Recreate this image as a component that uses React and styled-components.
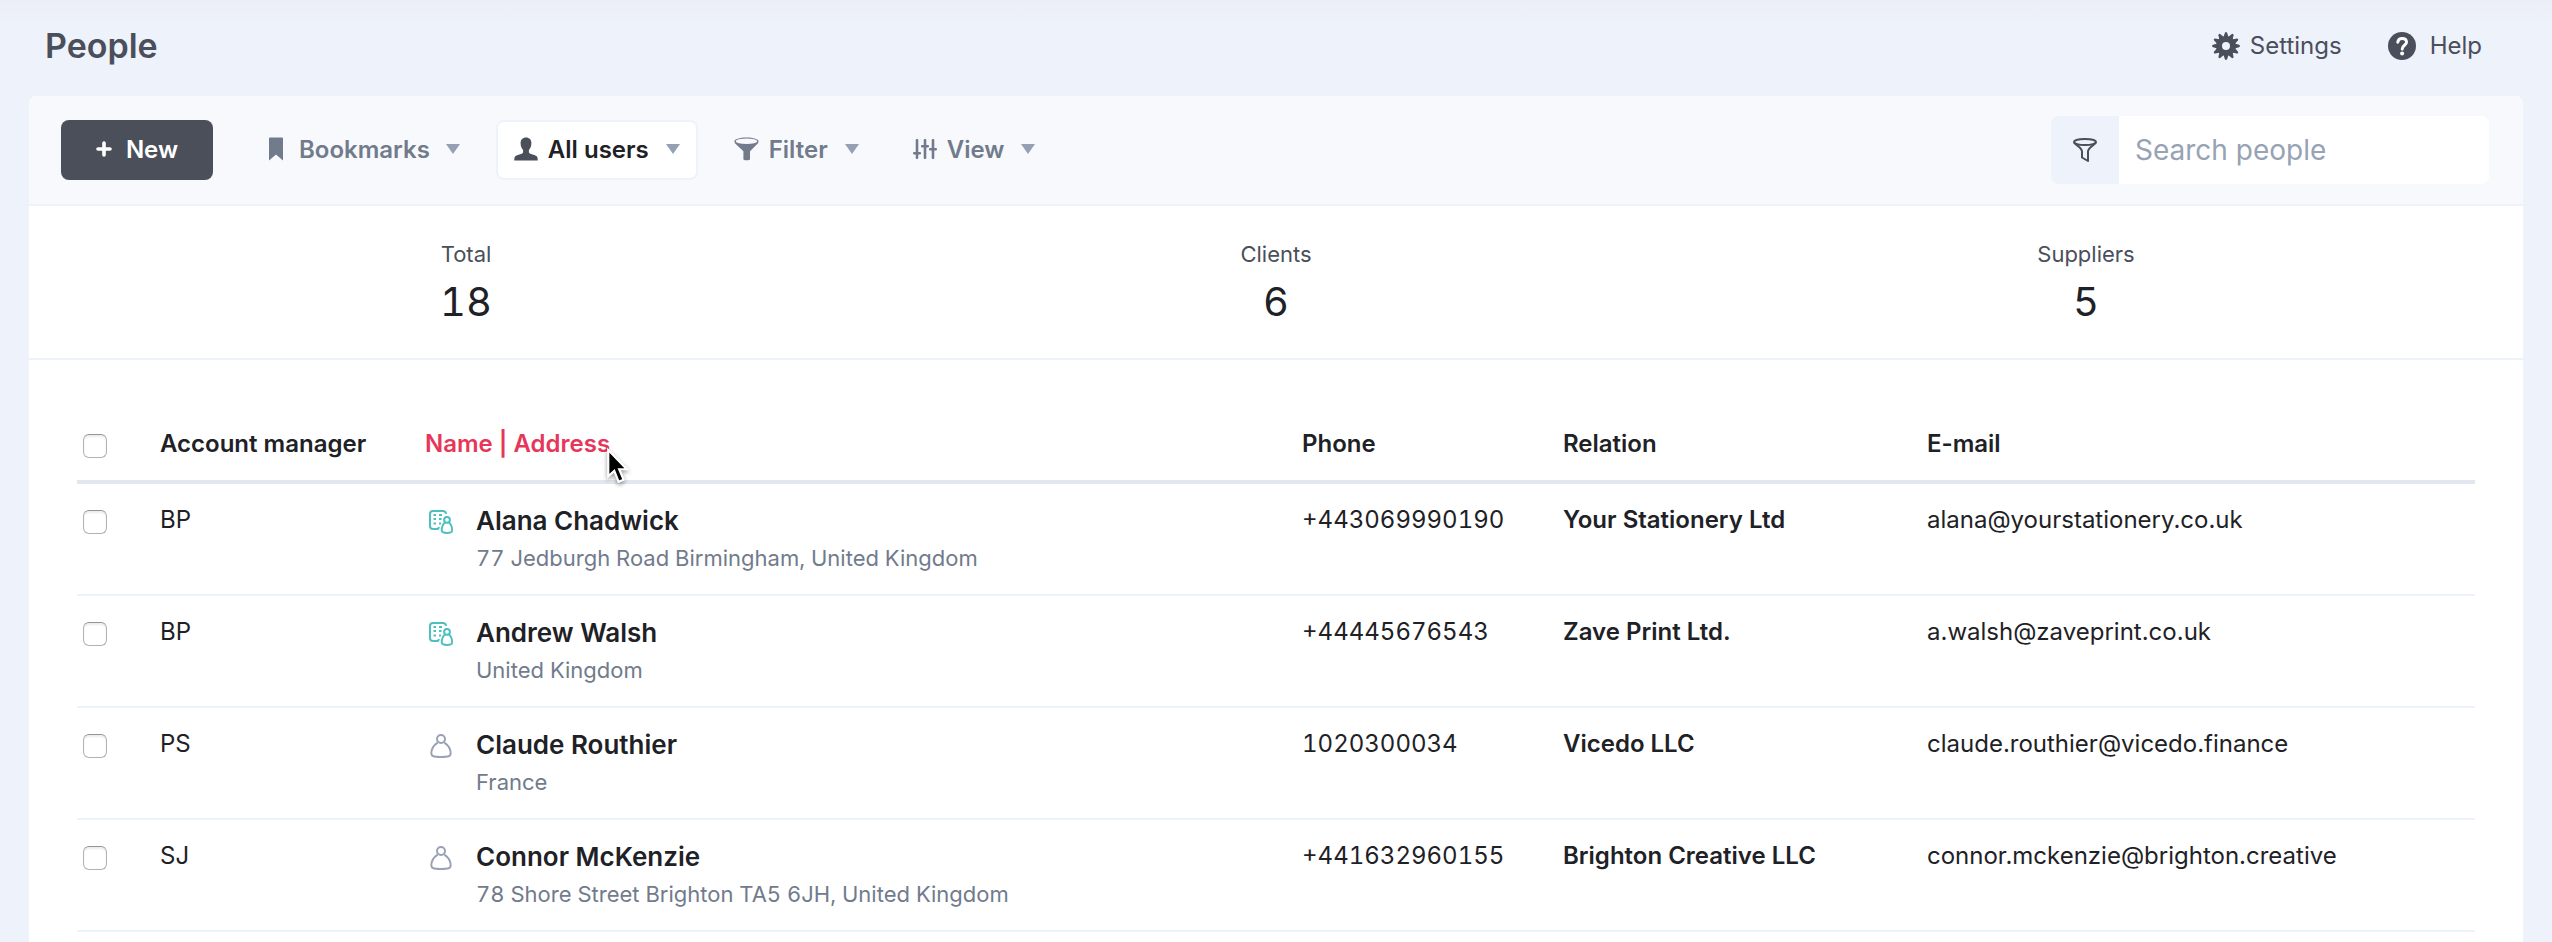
import styled, { createGlobalStyle, css } from "styled-components";

const GlobalStyle = createGlobalStyle`
  * {
    box-sizing: border-box;
  }
  body {
    margin: 0;
    background: #eef2fb;
    color: #1e2126;
    font-family: Inter, "Liberation Sans", sans-serif;
    font-size: 24px;
    line-height: 32px;
  }
  button,
  input {
    font-family: inherit;
  }
`;

const Page = styled.div`
  min-height: 100vh;
  padding: 0 29px;
  display: flex;
  flex-direction: column;
  background: linear-gradient(#ebeef7, #eef2fb 26px);
`;

const Header = styled.header`
  height: 96px;
  padding: 0 41px 4px 16px;
  display: flex;
  align-items: center;
  justify-content: space-between;
`;

const Title = styled.h1`
  margin: 0;
  font-size: 34px;
  font-weight: 600;
  line-height: 40px;
  color: #4a4f5b;
`;

const HeaderLinks = styled.nav`
  display: flex;
  gap: 46px;
`;

const HeaderLink = styled.a`
  display: flex;
  align-items: center;
  gap: ${(props) => props.$gap}px;
  color: #4a4f5b;
  text-decoration: none;

  svg {
    width: 28px;
    height: 28px;
  }
`;

const Panel = styled.main`
  flex: 1;
  background: #fff;
  border-radius: 8px 8px 0 0;
`;

const Toolbar = styled.div`
  display: flex;
  align-items: center;
  height: 110px;
  padding: 0 34px 0 32px;
  background: #f8f9fd;
  border-bottom: 2px solid #eef2fb;
  border-radius: 8px 8px 0 0;
`;

const NewButton = styled.button`
  display: flex;
  align-items: center;
  justify-content: center;
  gap: 14px;
  width: 152px;
  height: 60px;
  margin-right: 38px;
  padding: 0 0 2px;
  border: 0;
  border-radius: 8px;
  background: #4a4f5a;
  color: #fff;
  font-size: 24px;
  font-weight: 600;
`;

const MenuButton = styled.button`
  display: flex;
  align-items: center;
  gap: ${(props) => props.$gap || 10}px;
  height: 60px;
  margin-right: 18px;
  padding: 0 16px 2px;
  border: 2px solid transparent;
  border-radius: 8px;
  background: transparent;
  color: #717b8c;
  font-size: 24px;
  font-weight: 600;

  ${(props) =>
    props.$active &&
    css`
      background: #fff;
      border-color: #eef2fb;
      color: #1e2126;
    `}
`;

const Caret = styled.span`
  margin-left: ${(props) => props.$space}px;
  border: 7px solid transparent;
  border-top: 10px solid #95a0b3;
  border-bottom: 0;
`;

const Search = styled.form`
  display: flex;
  width: 438px;
  height: 68px;
  margin-left: auto;
  border-radius: 8px;
  overflow: hidden;
`;

const SearchFilter = styled.button`
  display: flex;
  align-items: center;
  justify-content: center;
  flex: none;
  width: 68px;
  padding: 0;
  border: 0;
  background: #eef2fb;
`;

const SearchInput = styled.input`
  flex: 1;
  min-width: 0;
  padding: 0 16px;
  border: 0;
  background: #fff;
  color: #1e2126;
  font-size: 28px;

  &::placeholder {
    color: #97a2b4;
    opacity: 1;
  }
`;

const Stats = styled.dl`
  display: grid;
  grid-template-columns: repeat(3, 1fr);
  height: 154px;
  margin: 0;
  padding: 32px 32px 0;
  border-bottom: 2px solid #eef2fb;
  text-align: center;
`;

const StatLabel = styled.dt`
  font-size: 22px;
  color: #4a4f5b;
`;

const StatValue = styled.dd`
  margin: 8px 0 0;
  font-size: 40px;
  font-variant-numeric: tabular-nums;
  line-height: 48px;
`;

const TableArea = styled.section`
  padding: 48px 48px 0;
`;

const Table = styled.table`
  width: 100%;
  table-layout: fixed;
  border-collapse: separate;
  border-spacing: 0;
  text-align: left;
`;

const Col = styled.col`
  width: ${(props) => props.$width}px;
`;

const HeadCell = styled.th`
  padding: 20px 0;
  border-bottom: 4px solid #e1e6ef;
  font-weight: 600;
  vertical-align: top;
`;

const SortButton = styled.button`
  display: block;
  position: relative;
  padding: 0;
  border: 0;
  background: none;
  color: #e6365a;
  font-size: 24px;
  font-weight: 600;
  line-height: 32px;
`;

const Pointer = styled.svg`
  position: absolute;
  left: 100%;
  top: 21px;
  width: 22px;
  height: 35px;
  margin-left: -4px;
  overflow: visible;
  filter: drop-shadow(0 2px 2px rgba(0, 0, 0, 0.4));
`;

const Cell = styled.td`
  padding: 20px 0 18px;
  border-bottom: 2px solid #eef2fb;
  font-weight: ${(props) => (props.$strong ? 600 : 400)};
  vertical-align: top;
`;

const PhoneCell = styled(Cell)`
  font-variant-numeric: tabular-nums;
`;

const Checkbox = styled.input`
  appearance: none;
  display: block;
  width: 24px;
  height: 24px;
  margin: 6px 0 0 6px;
  border: 1px solid #b2b2b2;
  border-top-color: #959595;
  border-radius: 6px;
  background: #fff;
  box-shadow: inset 0 2px 2px rgba(0, 0, 0, 0.08);
`;

const Person = styled.div`
  display: flex;
  gap: 23px;
  padding-left: 4px;

  > svg {
    flex: none;
    width: 24px;
    height: 24px;
    margin-top: 6px;
  }
`;

const PersonName = styled.a`
  display: block;
  color: #1e2126;
  font-size: 26px;
  font-weight: 600;
  line-height: 34px;
  text-decoration: none;
`;

const Address = styled.div`
  margin-top: 2px;
  color: #717b8c;
  font-size: 22px;
  font-variant-numeric: tabular-nums;
  line-height: 36px;
`;

const teeth = [0, 30, 60, 90, 120, 150, 180, 210, 240, 270, 300, 330];

const GearIcon = () => (
  <svg viewBox="0 0 28 28" fill="#4a4f5b" aria-hidden="true">
    <circle cx="14" cy="14" r="7" fill="none" stroke="#4a4f5b" strokeWidth="6" />
    {teeth.map((angle) => (
      <path
        key={angle}
        d="M11.4 5.5 12.8 1Q14-1 15.2 1L16.6 5.5Z"
        transform={`rotate(${angle} 14 14)`}
      />
    ))}
  </svg>
);

const HelpIcon = () => (
  <svg viewBox="0 0 28 28" fill="none" aria-hidden="true">
    <circle cx="14" cy="14" r="14" fill="#4a4f5b" />
    <path
      d="M9.8 10.2C10.1 7.6 12 6.4 14.1 6.4 16.6 6.4 18.5 7.8 18.5 10.2 18.5 13.2 14.2 13.4 14.2 17"
      stroke="#fff"
      strokeWidth="3"
      strokeLinecap="round"
    />
    <circle cx="14.1" cy="21.6" r="2" fill="#fff" />
  </svg>
);

const PlusIcon = () => (
  <svg width="16" height="16" viewBox="0 0 16 16" aria-hidden="true">
    <path d="M8 2V14M2 8H14" stroke="#fff" strokeWidth="3.6" strokeLinecap="round" />
  </svg>
);

const BookmarkIcon = () => (
  <svg width="14" height="24" viewBox="0 0 14 24" aria-hidden="true">
    <path d="M0 1.5Q0 .5 1 .5H13Q14 .5 14 1.5V23.5L7 17.5 0 23.5Z" fill="#717b8c" />
  </svg>
);

const UserIcon = () => (
  <svg width="24" height="24" viewBox="0 0 24 24" aria-hidden="true">
    <path
      d="M12 .5C8.7 .5 6.6 2.7 6.6 6.2 6.6 9.5 7.8 11.5 9.1 13V15.4C8.5 17.2 3 17.6 1.3 19.2 .4 20 .3 21.7 .3 23.5H23.7C23.7 21.7 23.6 20 22.7 19.2 21 17.6 15.5 17.2 14.9 15.4V13C16.2 11.5 17.4 9.5 17.4 6.2 17.4 2.7 15.3 .5 12 .5Z"
      fill="#4a4f5a"
    />
  </svg>
);

const FilterIcon = () => (
  <svg width="25" height="24" viewBox="0 0 25 24" aria-hidden="true">
    <path
      d="M.4 4.2C.4 2.3 5.5 .5 12.5 .5S24.6 2.3 24.6 4.2C24.6 5.5 23.6 6.7 22.5 7.8L16 14.3V22.5Q12.5 24.2 9.4 22.5V14.3L2.5 7.8C1.4 6.7 .4 5.5 .4 4.2Z"
      fill="#717b8c"
    />
    <ellipse cx="12.5" cy="4.2" rx="10.9" ry="2.8" fill="#f8f9fd" />
  </svg>
);

const ViewIcon = () => (
  <svg width="24" height="20" viewBox="0 0 24 20" aria-hidden="true">
    <path
      d="M4 1.2V18.8M12 1.2V18.8M20 1.2V18.8M1.2 14.2H6.8M9.2 7.2H14.8M17.2 10.2H22.8"
      stroke="#717b8c"
      strokeWidth="2.6"
      strokeLinecap="round"
    />
  </svg>
);

const FunnelIcon = () => (
  <svg width="24" height="24" viewBox="0 0 24 24" fill="none" aria-hidden="true">
    <g stroke="#4a4f5a" strokeWidth="2" strokeLinejoin="round">
      <ellipse cx="12" cy="4" rx="11" ry="3" />
      <path d="M1 4.2C1.5 6.5 9 9.5 9 13.5V19.5L15 23V13.5C15 9.5 22.5 6.5 23 4.2" />
    </g>
  </svg>
);

const PersonIcon = () => (
  <svg viewBox="0 0 24 24" fill="none" aria-label="Person" role="img">
    <g stroke="#97a2b4" strokeWidth="2">
      <circle cx="12" cy="5" r="4" />
      <path d="M8.7 8.6C5.3 10.8 2.3 15.2 2.3 19.6 2.3 22.3 4.5 23 12 23S21.7 22.3 21.7 19.6C21.7 15.2 18.7 10.8 15.3 8.6" />
    </g>
  </svg>
);

const CompanyPersonIcon = () => (
  <svg viewBox="0 0 24 24" fill="none" aria-label="Company contact" role="img">
    <g stroke="#4bc0c0" strokeWidth="2">
      <path d="M17 3.8C16.8 1.8 16 1 14 1H4C1.800 1 1 1.8 1 4V16C1 18.2 1.8 19 4 19H8.5Q9.7 19 9.7 17" />
      <circle cx="18" cy="9.8" r="2.9" />
      <path d="M16.2 12.2C14 14 12.7 17.5 12.7 20.3 12.7 22.4 14 23 18 23S23.2 22.4 23.2 20.3C23.2 17.5 22 14 19.8 12.2" />
      <path d="M4.5 5H7M10 5H13M4.500 9H7M10 9H12.5M4.5 13.5H7M10 13.5H12" />
    </g>
  </svg>
);

const stats = [
  { label: "Total", value: 18 },
  { label: "Clients", value: 6 },
  { label: "Suppliers", value: 5 },
];

const people = [
  {
    manager: "BP",
    name: "Alana Chadwick",
    address: "77 Jedburgh Road Birmingham, United Kingdom",
    phone: "+443069990190",
    relation: "Your Stationery Ltd",
    email: "alana@yourstationery.co.uk",
    company: true,
  },
  {
    manager: "BP",
    name: "Andrew Walsh",
    address: "United Kingdom",
    phone: "+44445676543",
    relation: "Zave Print Ltd.",
    email: "a.walsh@zaveprint.co.uk",
    company: true,
  },
  {
    manager: "PS",
    name: "Claude Routhier",
    address: "France",
    phone: "1020300034",
    relation: "Vicedo LLC",
    email: "claude.routhier@vicedo.finance",
  },
  {
    manager: "SJ",
    name: "Connor McKenzie",
    address: "78 Shore Street Brighton TA5 6JH, United Kingdom",
    phone: "+441632960155",
    relation: "Brighton Creative LLC",
    email: "connor.mckenzie@brighton.creative",
  },
];

const App = () => {
  return (
    <>
      <GlobalStyle />
      <Page>
        <Header>
          <Title>People</Title>
          <HeaderLinks>
            <HeaderLink href="#settings" $gap={10}>
              <GearIcon />
              Settings
            </HeaderLink>
            <HeaderLink href="#help" $gap={14}>
              <HelpIcon />
              Help
            </HeaderLink>
          </HeaderLinks>
        </Header>
        <Panel>
          <Toolbar>
            <NewButton type="button">
              <PlusIcon />
              New
            </NewButton>
            <MenuButton type="button" $gap={16}>
              <BookmarkIcon />
              Bookmarks
              <Caret $space={0} />
            </MenuButton>
            <MenuButton type="button" $active>
              <UserIcon />
              All users
              <Caret $space={7} />
            </MenuButton>
            <MenuButton type="button">
              <FilterIcon />
              Filter
              <Caret $space={7} />
            </MenuButton>
            <MenuButton type="button">
              <ViewIcon />
              View
              <Caret $space={7} />
            </MenuButton>
            <Search role="search" onSubmit={(e) => e.preventDefault()}>
              <SearchFilter type="button" aria-label="Search filter">
                <FunnelIcon />
              </SearchFilter>
              <SearchInput
                type="search"
                aria-label="Search people"
                placeholder="Search people"
              />
            </Search>
          </Toolbar>
          <Stats>
            {stats.map((stat) => (
              <div key={stat.label}>
                <StatLabel>{stat.label}</StatLabel>
                <StatValue>{stat.value}</StatValue>
              </div>
            ))}
          </Stats>
          <TableArea>
            <Table>
              <colgroup>
                <Col $width={83} />
                <Col $width={265} />
                <col />
                <Col $width={261} />
                <Col $width={364} />
                <Col $width={548} />
              </colgroup>
              <thead>
                <tr>
                  <HeadCell>
                    <Checkbox type="checkbox" aria-label="Select all people" />
                  </HeadCell>
                  <HeadCell>Account manager</HeadCell>
                  <HeadCell>
                    <SortButton type="button">
                      Name | Address
                      <Pointer viewBox="0 0 20 32" aria-hidden="true">
                        <path
                          d="M2 1V25L7.5 20 11.5 30 16 28 12 18.5H19Z"
                          fill="#000"
                          stroke="#fff"
                          strokeWidth="2"
                        />
                      </Pointer>
                    </SortButton>
                  </HeadCell>
                  <HeadCell>Phone</HeadCell>
                  <HeadCell>Relation</HeadCell>
                  <HeadCell>E-mail</HeadCell>
                </tr>
              </thead>
              <tbody>
                {people.map((person) => (
                  <tr key={person.name}>
                    <Cell>
                      <Checkbox type="checkbox" aria-label={`Select ${person.name}`} />
                    </Cell>
                    <Cell>{person.manager}</Cell>
                    <Cell>
                      <Person>
                        {person.company ? <CompanyPersonIcon /> : <PersonIcon />}
                        <div>
                          <PersonName href="#person">{person.name}</PersonName>
                          <Address>{person.address}</Address>
                        </div>
                      </Person>
                    </Cell>
                    <PhoneCell>{person.phone}</PhoneCell>
                    <Cell $strong>{person.relation}</Cell>
                    <Cell>{person.email}</Cell>
                  </tr>
                ))}
              </tbody>
            </Table>
          </TableArea>
        </Panel>
      </Page>
    </>
  );
};

export default App;
